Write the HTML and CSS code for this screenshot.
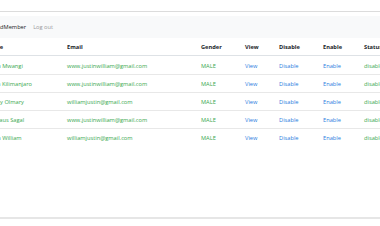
FILE: index.html
```html
<!DOCTYPE html>
<html lang="en">
<head>
  <meta charset="UTF-8">
  <meta name="viewport" content="width=device-width, initial-scale=1.0">
  <title>Members</title>
  <link rel="stylesheet" href="styles.css">
</head>
<body>

<div class="frame">
  <nav class="navbar">
    <a class="nav-link active" href="#">AddMember</a>
    <a class="nav-link" href="#">Log out</a>
  </nav>

  <table class="members">
    <colgroup>
      <col class="c-name"><col class="c-email"><col class="c-gender"><col class="c-view">
      <col class="c-disable"><col class="c-enable"><col class="c-status">
    </colgroup>
    <thead>
      <tr>
        <th>Name</th><th>Email</th><th>Gender</th><th>View</th><th>Disable</th><th>Enable</th><th>Status</th>
      </tr>
    </thead>
    <tbody>
      <tr>
        <td class="ok">Justin Mwangi</td><td class="ok">www.justinwilliam@gmail.com</td><td class="ok">MALE</td>
        <td><a href="#">View</a></td><td><a href="#">Disable</a></td><td><a href="#">Enable</a></td><td class="ok">disabled</td>
      </tr>
      <tr>
        <td class="ok">Kevin Kilimanjaro</td><td class="ok">www.justinwilliam@gmail.com</td><td class="ok">MALE</td>
        <td><a href="#">View</a></td><td><a href="#">Disable</a></td><td><a href="#">Enable</a></td><td class="ok">disabled</td>
      </tr>
      <tr>
        <td class="ok">Jeffrey Olmary</td><td class="ok">williamjustin@gmail.com</td><td class="ok">MALE</td>
        <td><a href="#">View</a></td><td><a href="#">Disable</a></td><td><a href="#">Enable</a></td><td class="ok">disabled</td>
      </tr>
      <tr>
        <td class="ok">Nicolaus Sagal</td><td class="ok">www.justinwilliam@gmail.com</td><td class="ok">MALE</td>
        <td><a href="#">View</a></td><td><a href="#">Disable</a></td><td><a href="#">Enable</a></td><td class="ok">disabled</td>
      </tr>
      <tr>
        <td class="ok">Justin William</td><td class="ok">williamjustin@gmail.com</td><td class="ok">MALE</td>
        <td><a href="#">View</a></td><td><a href="#">Disable</a></td><td><a href="#">Enable</a></td><td class="ok">disabled</td>
      </tr>
    </tbody>
  </table>
</div>

</body>
</html>
```

FILE: styles.css
```css
body {
  font-family: "Open Sans", Arial, sans-serif;
  font-size: 5.7px;
  color: #212529;
  background-color: #fff;
  margin: 0;
  overflow: hidden;
}

.frame {
  margin-top: 11px;
  height: 201px;
  padding-top: 4px;
  border-top: 1px solid #dcdcdc;
  border-bottom: 2px solid #e6e6e6;
  overflow: hidden;
}

.navbar {
  display: flex;
  align-items: center;
  gap: 7px;
  height: 22px;
  margin-left: -7px;
  background-color: #f8f9fa;
}

.nav-link {
  text-decoration: none;
  color: #9a9a9a;
}

.nav-link.active {
  color: #222;
}

.members {
  table-layout: fixed;
  border-collapse: separate;
  border-spacing: 0;
  width: 460px;
  margin-left: -20px;
}

.c-name { width: 81px; }
.c-email { width: 134px; }
.c-gender { width: 44px; }
.c-view { width: 34px; }
.c-disable { width: 44px; }
.c-enable { width: 41px; }
.c-status { width: 82px; }

th, td {
  padding: 0 0 0 6px;
  text-align: left;
  white-space: nowrap;
  overflow: hidden;
}

th {
  height: 17px;
  font-weight: bold;
  border-bottom: 1px solid #dee2e6;
}

td {
  height: 17px;
  border-top: 1px solid #e8e8e8;
}

tbody tr:first-child td {
  border-top-color: transparent;
}

td.ok {
  color: #3aa84f;
}

td a {
  color: #2b7de0;
  text-decoration: none;
}
```
